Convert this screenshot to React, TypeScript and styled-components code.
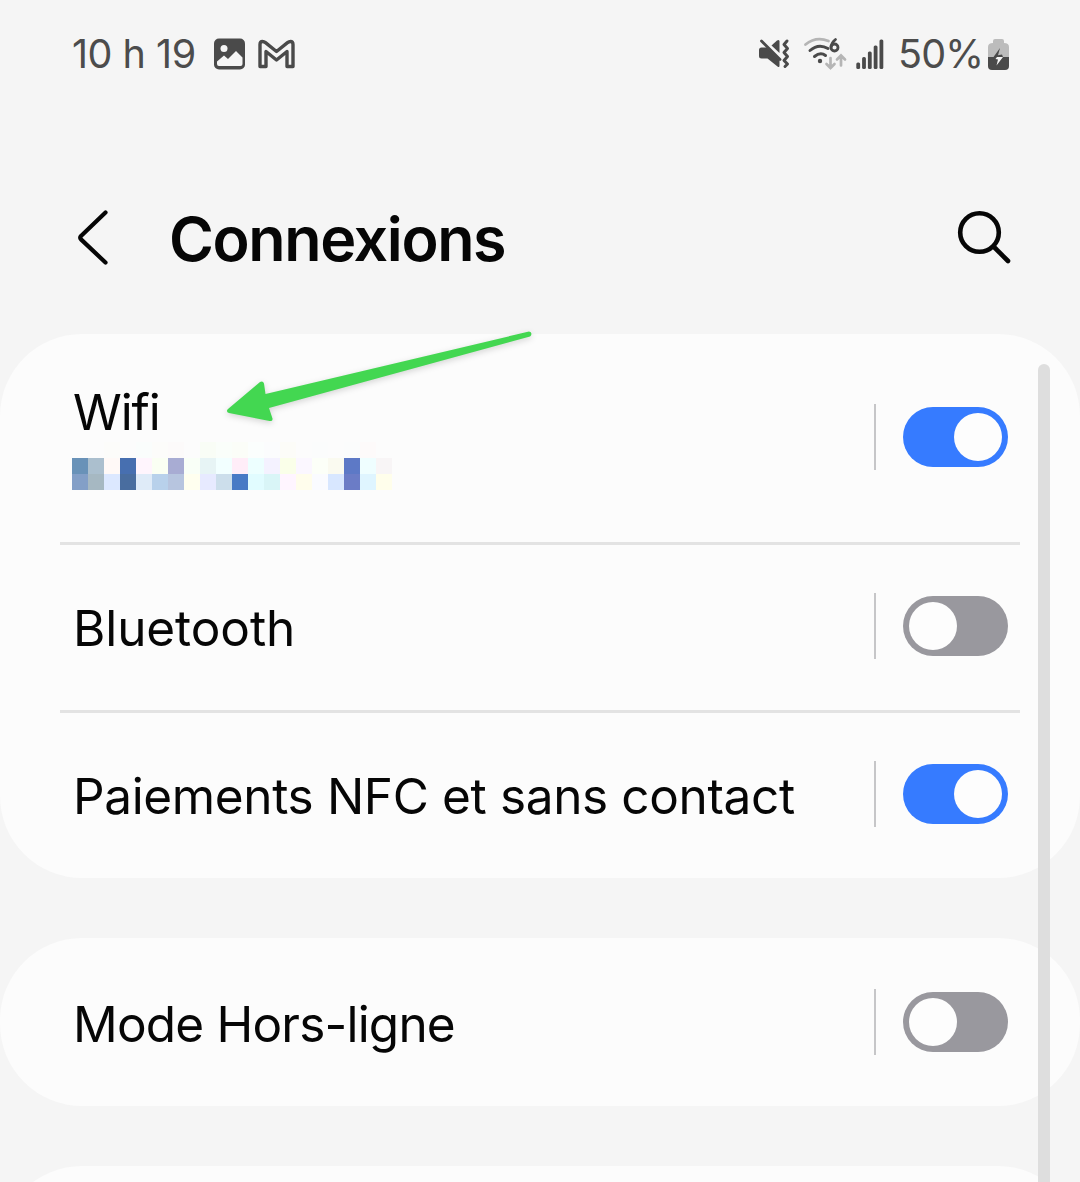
import React from "react";
import styled, { createGlobalStyle } from "styled-components";

const GlobalStyle = createGlobalStyle`
  * { box-sizing: border-box; }
  body {
    margin: 0;
    background: #f5f5f5;
    color: #060606;
    font-family: Inter, Roboto, "Liberation Sans", sans-serif;
  }
`;

const Screen = styled.main`
  position: relative;
  width: 1080px;
  height: 1182px;
  overflow: hidden;
  display: flex;
  flex-direction: column;
  background: #f5f5f5;
`;

const StatusBar = styled.header`
  flex: none;
  height: 108px;
  padding: 0 71px 0 72px;
  display: flex;
  align-items: center;
  justify-content: space-between;
  color: #4c4c4c;
`;

const StatusGroup = styled.div`
  display: flex;
  align-items: center;
`;

const StatusText = styled.span<{ $spacing: number; $width: number }>`
  width: ${(p) => p.$width}px;
  font-size: 39.5px;
  font-weight: 400;
  line-height: 48px;
  white-space: nowrap;
  letter-spacing: ${(p) => p.$spacing}px;
`;

const Icon = styled.svg<{ $left?: number }>`
  display: block;
  flex: none;
  margin-left: ${(p) => p.$left ?? 0}px;
  overflow: visible;
`;

const TitleBar = styled.div`
  flex: none;
  height: 226px;
  padding: 102px 69px 0 77px;
  display: flex;
  align-items: flex-start;
`;

const IconButton = styled.button`
  display: block;
  padding: 0;
  border: 0;
  background: none;
  color: #060606;
`;

const Title = styled.h1`
  flex: 1;
  margin: -8px 0 0 60px;
  font-size: 61px;
  line-height: 74px;
  font-weight: 620;
  letter-spacing: -1.4px;
`;

const Sections = styled.div`
  flex: none;
  display: flex;
  flex-direction: column;
  gap: 60px;
`;

const Card = styled.section`
  border-radius: 82px;
  background: #fcfcfc;
`;

const Row = styled.div<{ $height: number; $divided?: boolean; $bottom?: number }>`
  height: ${(p) => p.$height}px;
  margin: 0 60px;
  padding: 0 12px ${(p) => p.$bottom ?? 0}px 13px;
  display: flex;
  align-items: center;
  border-bottom: ${(p) => (p.$divided ? "3px solid #e3e3e3" : "0")};
`;

const RowBody = styled.div<{ $top: number; $bottom: number }>`
  flex: 1;
  padding: ${(p) => p.$top}px 0 ${(p) => p.$bottom}px;
  display: flex;
  flex-direction: column;
`;

const Label = styled.span<{ $spacing: number }>`
  font-size: 49.5px;
  line-height: 60px;
  white-space: nowrap;
  letter-spacing: ${(p) => p.$spacing}px;
`;

const Separator = styled.span`
  width: 2px;
  height: 66px;
  margin-right: 27px;
  background: #c6c6c8;
`;

const Track = styled.button<{ $on: boolean }>`
  width: 105px;
  height: 60px;
  padding: 0 6px;
  border: 0;
  border-radius: 30px;
  display: flex;
  align-items: center;
  justify-content: ${(p) => (p.$on ? "flex-end" : "flex-start")};
  background: ${(p) => (p.$on ? "#367bff" : "#99989e")};
`;

const Thumb = styled.span`
  width: 48px;
  height: 48px;
  border-radius: 50%;
  background: #fdfdfd;
`;

const Mosaic = styled.div`
  width: 320px;
  margin: 0 0 0 -1px;
  display: grid;
  grid-template-columns: repeat(20, 16px);
  grid-auto-rows: 16px;
`;

const Cell = styled.span<{ $color: string }>`
  background: ${(p) => p.$color};
`;

const ScrollThumb = styled.div`
  position: absolute;
  top: 364px;
  right: 30px;
  bottom: 0;
  width: 12px;
  border-radius: 6px 6px 0 0;
  background: #dedede;
`;

const Arrow = styled.svg`
  position: absolute;
  left: 220px;
  top: 324px;
  filter: drop-shadow(0 2px 3px rgba(0, 0, 0, 0.16));
`;

const mosaicColors = [
  "#fcfcfc", "#fcfcfc", "#fcfcfa", "#fcfcfc", "#fafdfc", "#fcfcfa", "#fcfafa", "#fcfcfc", "#f9fdf6", "#fafefa",
  "#fbfdf8", "#fbfefd", "#fbfcfd", "#fcfcf8", "#fcfcfc", "#fbfcfc", "#fcfcfc", "#fbfcfc", "#fdfafa", "#fcfcfc",
  "#6992b8", "#abbfce", "#fff9f7", "#476fb0", "#fff5fd", "#fafff3", "#a8acd3", "#f9fff7", "#e7f4f5", "#f2ffff",
  "#ffedf8", "#edffff", "#f4f2ff", "#faffe9", "#fbf7ff", "#fcfff8", "#fafaf0", "#5d79c6", "#effeff", "#f8f5f6",
  "#839fc7", "#a6b8c2", "#dce8ff", "#496d9f", "#dfebf8", "#b8d1eb", "#b7c5df", "#ffffef", "#e7eaff", "#ccdeeb",
  "#487ac5", "#e1fcff", "#d9f5f7", "#fff5ff", "#fffdec", "#fafbff", "#d8e7ff", "#6b7cc6", "#dff5ff", "#fffeeb",
];

type SwitchProps = { on: boolean; label: string };

function Switch({ on, label }: SwitchProps) {
  return (
    <>
      <Separator />
      <Track $on={on} role="switch" aria-checked={on} aria-label={label}>
        <Thumb />
      </Track>
    </>
  );
}

type SettingProps = {
  label: string;
  on: boolean;
  height: number;
  spacing: number;
  divided?: boolean;
  bottom?: number;
  bodyTop?: number;
  bodyBottom?: number;
  children?: React.ReactNode;
};

function Setting({
  label,
  on,
  height,
  spacing,
  divided,
  bottom = 0,
  bodyTop = 0,
  bodyBottom = 0,
  children,
}: SettingProps) {
  return (
    <Row $height={height} $divided={divided} $bottom={bottom}>
      <RowBody $top={bodyTop} $bottom={bodyBottom}>
        <Label $spacing={spacing}>{label}</Label>
        {children}
      </RowBody>
      <Switch on={on} label={label} />
    </Row>
  );
}

function PictureIcon() {
  return (
    <Icon $left={19} width="31" height="32" viewBox="0 0 31 32">
      <rect x="0" y="0.5" width="31" height="31" rx="5" fill="#4a4a4a" />
      <circle cx="10" cy="10.5" r="3.5" fill="#f5f5f5" />
      <path d="M3 23.5 10 17.5 14 21 22 13 28.5 19.5V26Q28.5 28 26.5 28H5Q3 28 3 26Z" fill="#f5f5f5" />
    </Icon>
  );
}

function MailIcon() {
  return (
    <Icon $left={13} width="37" height="30" viewBox="0 0 37 30" fill="none" stroke="#4a4a4a" strokeWidth="3.4" strokeLinejoin="round">
      <path d="M2 27.500V5.500Q2 2.500 4.500 2.500Q6 2.500 7.500 3.700L18.500 12.500 29.500 3.700Q31 2.500 32.500 2.500Q35 2.500 35 5.500V27.500H29V12.500L18.500 21 8 12.500V27.500Z" />
    </Icon>
  );
}

function MuteIcon() {
  return (
    <Icon width="31" height="30" viewBox="0 0 31 30" fill="none" stroke="#4a4a4a">
      <path d="M0 11Q0 8.500 2.500 8.500H8L20.500 21V26.500Q20.500 29 18.500 27.500L8.500 19.500H2.500Q0 19.500 0 17Z" fill="#4a4a4a" stroke="none" />
      <path d="M12.500 6.500 18 1.500Q20.500 0 20.500 2.500V14Z" fill="#4a4a4a" stroke="none" />
      <path d="M2.500 2 21 20.500" strokeWidth="2.800" strokeLinecap="round" />
      <path d="M28 2 25 5.500 28.500 9.500 25 13.500 28.500 17.500 25 21.500 28.500 25 26 27.500" strokeWidth="3" strokeLinecap="round" strokeLinejoin="round" />
    </Icon>
  );
}

function WifiIcon() {
  return (
    <Icon $left={14} width="42" height="32" viewBox="0 0 42 32" fill="none" strokeLinecap="round">
      <path d="M1.500 6.500Q12 -2 24.500 3" stroke="#b5b5b5" strokeWidth="2.800" />
      <path d="M6 12.500Q14.500 5 24 10.500" stroke="#4a4a4a" strokeWidth="3" />
      <path d="M10.500 18.500Q16.500 13.500 21.500 17.500" stroke="#4a4a4a" strokeWidth="3" />
      <circle cx="16" cy="23" r="2.200" fill="#4a4a4a" />
      <circle cx="30.500" cy="9.500" r="3.500" stroke="#4a4a4a" strokeWidth="2.800" />
      <path d="M31.500 1.500Q27.500 4.500 27 9" stroke="#4a4a4a" strokeWidth="2.800" />
      <path d="M26.500 20V30M22.500 26 26.500 30 30.500 26M37 27.500V18M33 21.500 37 17.500 41 21.500" stroke="#b5b5b5" strokeWidth="2.700" />
    </Icon>
  );
}

function SignalIcon() {
  return (
    <Icon $left={10} width="28" height="30" viewBox="0 0 28 30" fill="#4a4a4a">
      <rect x="0.300" y="23.500" width="3.800" height="6.500" rx="1.500" />
      <rect x="6.100" y="18" width="3.800" height="12" rx="1.500" />
      <rect x="11.900" y="12.500" width="3.800" height="17.500" rx="1.500" />
      <rect x="17.700" y="6.500" width="3.800" height="23.500" rx="1.500" />
      <rect x="23.500" y="0.500" width="3.800" height="29.500" rx="1.500" />
    </Icon>
  );
}

function BatteryIcon() {
  return (
    <Icon $left={5} width="21" height="31" viewBox="0 0 21 31">
      <path d="M5 4V2Q5 0 7 0H14Q16 0 16 2V4Q21 4 21 8V18H0V8Q0 4 5 4Z" fill="#bcbcbc" />
      <path d="M0 18H21V27Q21 31 17 31H4Q0 31 0 27Z" fill="#4a4a4a" />
      <path d="M12 9 5.500 18H15L14 15.500 10 16.200Z" fill="#4a4a4a" />
      <path d="M9 18H15L8.500 26.500 10 20.500 7.500 20Z" fill="#f5f5f5" />
    </Icon>
  );
}

export default function App() {
  return (
    <>
      <GlobalStyle />
      <Screen>
        <StatusBar>
          <StatusGroup>
            <StatusText $spacing={-0.5} $width={123}>10 h 19</StatusText>
            <PictureIcon />
            <MailIcon />
          </StatusGroup>
          <StatusGroup>
            <MuteIcon />
            <WifiIcon />
            <SignalIcon />
            <Icon width="14" height="1" />
            <StatusText $spacing={-0.8} $width={85}>50%</StatusText>
            <BatteryIcon />
          </StatusGroup>
        </StatusBar>

        <TitleBar>
          <IconButton aria-label="Retour">
            <Icon width="32" height="56" viewBox="0 0 32 56" fill="none" stroke="currentColor" strokeWidth="4.2" strokeLinecap="round" strokeLinejoin="round">
              <path d="M28.500 2.500 4 26Q2.500 27.700 4 29.400L28.500 52.500" />
            </Icon>
          </IconButton>
          <Title>Connexions</Title>
          <IconButton aria-label="Rechercher">
            <Icon width="54" height="54" viewBox="0 0 54 54" fill="none" stroke="currentColor" strokeWidth="4.600" strokeLinecap="round">
              <circle cx="22.500" cy="22.500" r="19.300" />
              <path d="M37 37 51 51" />
            </Icon>
          </IconButton>
        </TitleBar>

        <Sections>
          <Card>
            <Setting label="Wifi" on height={211} spacing={-1.1} divided bottom={3} bodyBottom={1}>
              <Mosaic aria-hidden="true">
                {mosaicColors.map((color, i) => (
                  <Cell key={i} $color={color} />
                ))}
              </Mosaic>
            </Setting>
            <Setting label="Bluetooth" on={false} height={168} spacing={-0.1} divided bottom={3} bodyTop={3} />
            <Setting label="Paiements NFC et sans contact" on height={165} spacing={-0.36} bottom={3} bodyTop={3} />
          </Card>
          <Card>
            <Setting label="Mode Hors-ligne" on={false} height={168} spacing={-0.8} bodyTop={3} />
          </Card>
          <Card>
            <Row $height={168} />
          </Card>
        </Sections>

        <ScrollThumb />
        <Arrow width="320" height="110" viewBox="220 324 320 110" aria-hidden="true">
          <path
            d="M529 331.500Q532.500 332 531 335.500L530 336.500 269 408 272.500 418.500Q273 421.500 269.500 421L229 413Q225.500 411.500 228 409L260 382Q263 380.500 264 383.500L265.500 394Z"
            fill="#43d751"
          />
        </Arrow>
      </Screen>
    </>
  );
}
